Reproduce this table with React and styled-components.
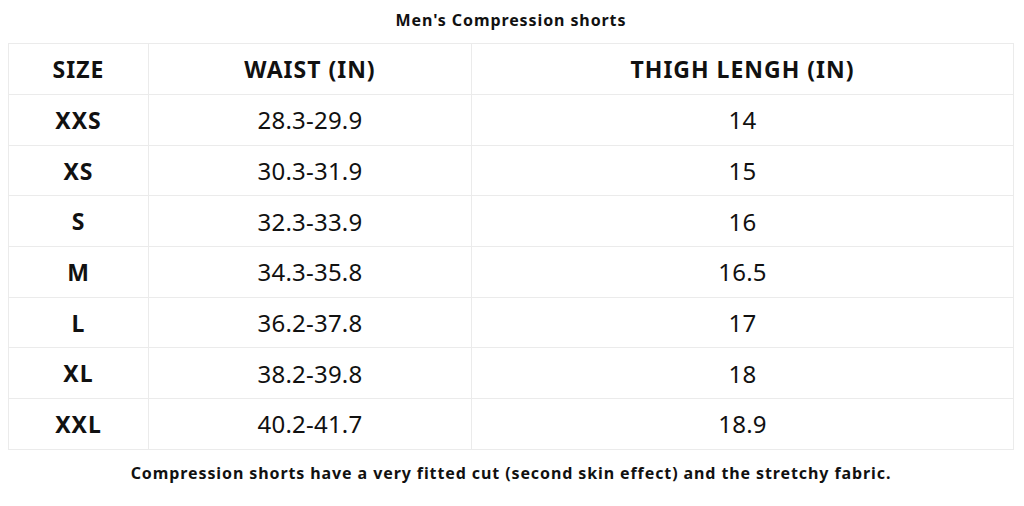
import styled, { createGlobalStyle } from 'styled-components'

const GlobalStyle = createGlobalStyle`
  body {
    margin: 0;
    background: #fff;
    font-family: "Noto Sans", "Open Sans", sans-serif;
    color: #111;
  }
`

const rows = [
  ['XXS', '28.3-29.9', '14'],
  ['XS', '30.3-31.9', '15'],
  ['S', '32.3-33.9', '16'],
  ['M', '34.3-35.8', '16.5'],
  ['L', '36.2-37.8', '17'],
  ['XL', '38.2-39.8', '18'],
  ['XXL', '40.2-41.7', '18.9'],
]

export default function App(){
  return(
    <Page>
      <GlobalStyle />
      <Title>Men's Compression shorts</Title>
      <Table>
        <thead>
          <tr>
            <HeadCell $width="139px">SIZE</HeadCell>
            <HeadCell $width="322px">WAIST (IN)</HeadCell>
            <HeadCell>THIGH LENGH (IN)</HeadCell>
          </tr>
        </thead>
        <tbody>
          {rows.map(([size, waist, thigh]) => (
            <Row key={size}>
              <Cell $bold>{size}</Cell>
              <Cell>{waist}</Cell>
              <Cell>{thigh}</Cell>
            </Row>
          ))}
        </tbody>
      </Table>
      <Note>Compression shorts have a very fitted cut (second skin effect) and the stretchy fabric.</Note>
    </Page>
  )
}

const Page = styled.div`
  padding: 8px 10px 0 8px;
`

const Title = styled.h2`
  margin: 0;
  height: 35px;
  line-height: 24px;
  text-align: center;
  font-size: 16px;
  font-weight: 700;
  letter-spacing: 0.9px;
`

const Table = styled.table`
  width: 100%;
  border-collapse: collapse;
  table-layout: fixed;

  thead tr {
    height: 51px;
  }
`

const HeadCell = styled.th`
  width: ${p => p.$width || 'auto'};
  border: 1px solid #ebebeb;
  padding: 0;
  text-align: center;
  font-size: 23px;
  font-weight: 700;
  letter-spacing: 1px;
`

const Row = styled.tr`
  height: 50.7px;
`

const Cell = styled.td`
  border: 1px solid #ebebeb;
  padding: 0;
  text-align: center;
  font-size: ${p => (p.$bold ? '23px' : '24px')};
  font-weight: ${p => (p.$bold ? 700 : 400)};
  letter-spacing: ${p => (p.$bold ? '1px' : '0.2px')};
`

const Note = styled.p`
  margin: 12px 0 0;
  text-align: center;
  font-size: 16px;
  font-weight: 700;
  letter-spacing: 0.9px;
`
